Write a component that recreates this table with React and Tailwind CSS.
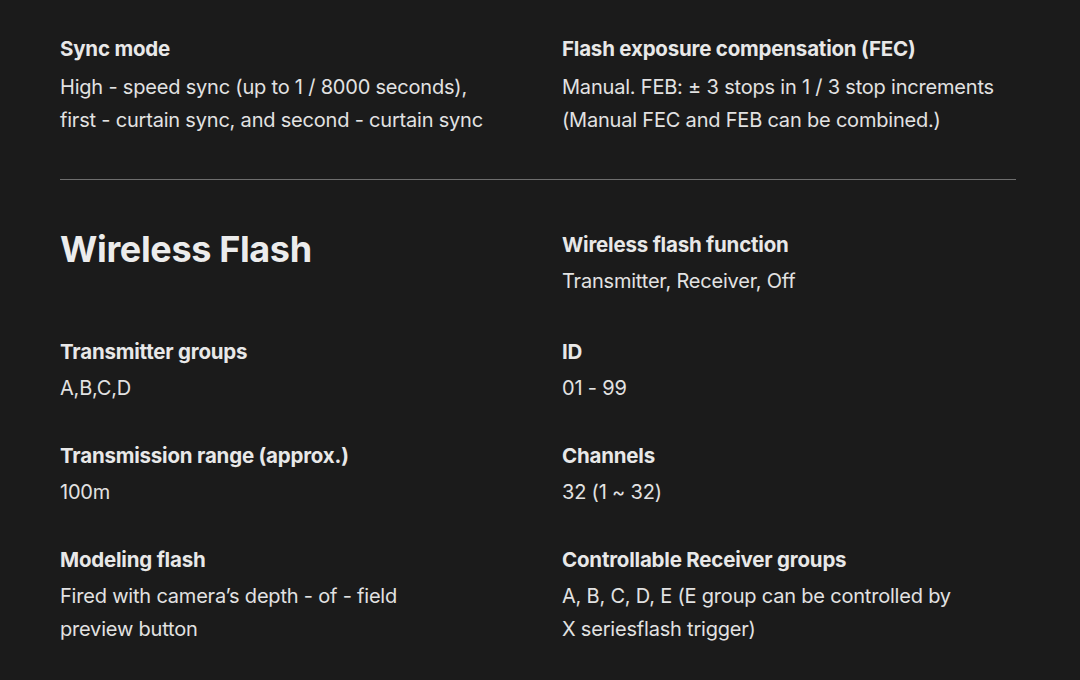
import React from "react";

const font = { fontFamily: "Inter, 'Noto Sans', sans-serif" };

function Item({ label, lines, gap = "mt-[6px]", extra = "" }) {
  return (
    <div className={extra}>
      <div className="text-[20.5px] leading-[28px] font-bold text-[#e8e8e8] tracking-[-0.01em]">{label}</div>
      <div className={`${gap} text-[20px] leading-[33px] text-[#e2e2e2] tracking-[-0.01em]`}>
        {lines.map((l, i) => (
          <div key={i}>{l}</div>
        ))}
      </div>
    </div>
  );
}

export default function App() {
  return (
    <div className="w-[1080px] h-[680px] bg-[#1b1b1b] overflow-hidden" style={font}>
      <div className="px-[60px] pt-[35px] w-[1076px]">
        <div className="grid grid-cols-2 gap-x-[48px]">
          <Item
            gap="mt-[8px]"
            label="Sync mode"
            lines={["High - speed sync (up to 1 / 8000 seconds),", "first - curtain sync, and second - curtain sync"]}
          />
          <Item
            gap="mt-[8px]"
            label="Flash exposure compensation (FEC)"
            lines={["Manual. FEB: ± 3 stops in 1 / 3 stop increments", "(Manual FEC and FEB can be combined.)"]}
          />
        </div>
        <div className="mt-[42px] border-t border-[#6e6e6e]" />
        <div className="grid grid-cols-2 gap-x-[48px] gap-y-[37px] pt-[51px]">
          <div>
            <h2 className="-mt-[5px] text-[36px] leading-[46px] font-bold text-[#ececec] tracking-[-0.01em]">Wireless Flash</h2>
          </div>
          <Item extra="mb-[3px]" label="Wireless flash function" lines={["Transmitter, Receiver, Off"]} />
          <Item label="Transmitter groups" lines={["A,B,C,D"]} />
          <Item label="ID" lines={["01 - 99"]} />
          <Item label="Transmission range (approx.)" lines={["100m"]} />
          <Item label="Channels" lines={["32 (1 ~ 32)"]} />
          <Item label="Modeling flash" lines={["Fired with camera’s depth - of - field", "preview button"]} />
          <Item
            label="Controllable Receiver groups"
            lines={["A, B, C, D, E (E group can be controlled by", "X seriesflash trigger)"]}
          />
        </div>
      </div>
    </div>
  );
}
